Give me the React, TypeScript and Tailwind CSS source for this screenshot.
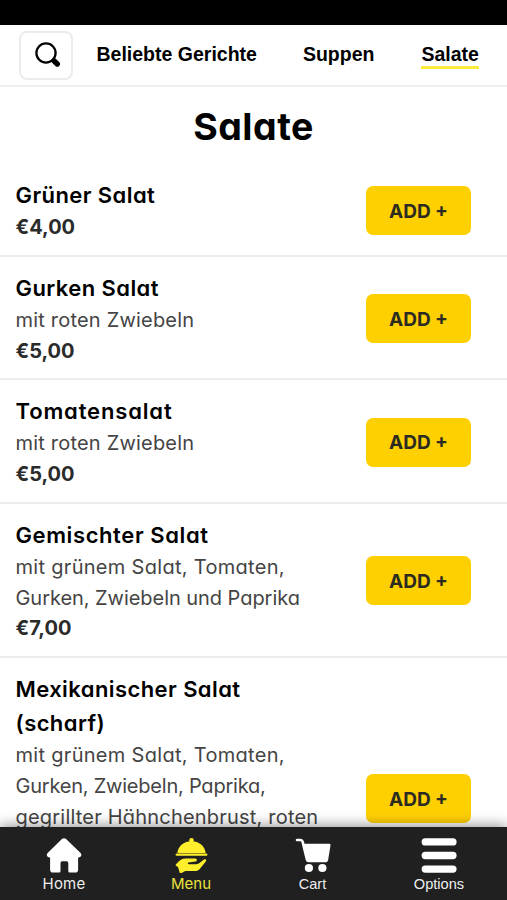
import { useState } from "react";
import type { ReactNode } from "react";

interface Line {
  text: string;
  className: string;
}

interface Dish {
  name: string;
  nameClass: string;
  lines: Line[];
  price?: string;
  rowClass?: string;
}

const categories = [
  { label: "Beliebte Gerichte", gap: "" },
  { label: "Suppen", gap: "ml-[46px]" },
  { label: "Salate", gap: "ml-[47px]" },
];

const dishes: Dish[] = [
  { name: "Grüner Salat", nameClass: "tracking-[0.42px]", lines: [], price: "€4,00" },
  {
    name: "Gurken Salat",
    nameClass: "tracking-[0.42px]",
    lines: [{ text: "mit roten Zwiebeln", className: "tracking-[0.2px]" }],
    price: "€5,00",
  },
  {
    name: "Tomatensalat",
    nameClass: "tracking-[0.85px]",
    lines: [{ text: "mit roten Zwiebeln", className: "tracking-[0.2px]" }],
    price: "€5,00",
  },
  {
    name: "Gemischter Salat",
    nameClass: "tracking-[0.6px]",
    lines: [
      { text: "mit grünem Salat, Tomaten,", className: "tracking-[0.3px]" },
      { text: "Gurken, Zwiebeln und Paprika", className: "tracking-[-0.05px]" },
    ],
    price: "€7,00",
  },
  {
    name: "Mexikanischer Salat (scharf)",
    nameClass: "tracking-[0.42px]",
    lines: [
      { text: "mit grünem Salat, Tomaten,", className: "tracking-[0.3px]" },
      { text: "Gurken, Zwiebeln, Paprika,", className: "tracking-[-0.22px]" },
      { text: "gegrillter Hähnchenbrust, roten", className: "tracking-[0.2px]" },
    ],
    rowClass: "h-[279px]",
  },
];

function SearchIcon() {
  return (
    <svg viewBox="0 0 28 28" className="ml-1 size-7" fill="none" stroke="#000" strokeLinecap="round">
      <circle cx="12" cy="12" r="9.6" strokeWidth="2.3" />
      <path d="M19 19l1.6 1.6" strokeWidth="2.6" />
      <path d="M20.4 20.2l2.9 2.8" strokeWidth="5.4" />
    </svg>
  );
}

function HomeIcon() {
  return (
    <svg viewBox="0 0 36 36" className="size-9" fill="#fff">
      <path d="M16.2 1.8c1-.9 2.6-.9 3.6 0L34.6 16c1.6 1.6.6 4.2-1.6 4.4h-.9v12.4a2.8 2.8 0 0 1-2.8 2.8h-5.5a1.5 1.5 0 0 1-1.5-1.5V26a1.7 1.7 0 0 0-1.7-1.7h-4.4a1.7 1.7 0 0 0-1.7 1.7v8.1a1.5 1.5 0 0 1-1.5 1.5H6.9a2.8 2.8 0 0 1-2.8-2.8V20.4h-.9c-2.2-.2-3.2-2.8-1.6-4.4z" />
    </svg>
  );
}

function MenuIcon() {
  return (
    <svg viewBox="0 0 34 36" className="h-9 w-[34px]" fill="#ffee2b">
      <circle cx="17.5" cy="3.4" r="2.3" />
      <path d="M3.4 15.9c.6-6.8 6.4-11.6 14.1-11.6s13.5 4.8 14.1 11.6z" />
      <rect x="1.6" y="16.6" width="31.8" height="2.2" rx="1" />
      <path d="M5.2 23.9c2-1.7 4-2.5 6.2-2.5h9.8c2.1 0 2.3 2.9.2 3.2l-7 .9c-.9.2-.8 1.6.2 1.7h7.6c1.5 0 2.6-.6 3.6-1.4l3.9-3.1c1.5-1.1 3.2.3 2.1 1.8l-6.1 7.5c-1.3 1.4-2.7 2-4.7 2h-8c-1.7 0-2.9.4-3.9 1.2l-2 .9c-.8.3-1.3 0-1.5-.8L4 30l-2-1.2c-.5-.5-.4-1.1 0-1.6z" />
    </svg>
  );
}

function CartIcon() {
  return (
    <svg viewBox="0 0 36 36" className="size-9" fill="#fff">
      <path d="M2 3h3.5c1.2 0 1.8.4 2.1 1.6l4.3 17.8c.2 1 .8 1.5 1.8 1.5H31" fill="none" stroke="#fff" strokeWidth="2.6" strokeLinecap="round" />
      <path d="M8.2 6.7h26c1 0 1.5.7 1.3 1.6l-2.4 15c-.2.9-.8 1.4-1.7 1.4H13.2z" />
      <circle cx="13.9" cy="31" r="4.1" />
      <circle cx="27.4" cy="31" r="4.1" />
    </svg>
  );
}

function OptionsIcon() {
  return (
    <svg viewBox="0 0 36 36" className="size-9" fill="#fff">
      <rect x="0.6" y="1.2" width="35" height="7.4" rx="3.7" />
      <rect x="0.6" y="14.8" width="35" height="7.4" rx="3.7" />
      <rect x="0.6" y="28.4" width="35" height="7.4" rx="3.7" />
    </svg>
  );
}

function TabItem({ icon, label, className }: { icon: ReactNode; label: string; className: string }) {
  return (
    <a href="#" className="flex flex-col items-center pt-2.5">
      {icon}
      <span className={`mt-px leading-5 ${className}`}>{label}</span>
    </a>
  );
}

function DishRow({ dish, onAdd }: { dish: Dish; onAdd: () => void }) {
  return (
    <li
      className={`flex shrink-0 items-center justify-between border-b-2 border-[#ededed] pt-3.5 pr-9 pb-3 pl-[15.5px] last:border-b-0 ${dish.rowClass ?? ""}`}
    >
      <div className="w-[320px] self-start">
        <h3 className={`w-[260px] text-[22px] leading-[34px] font-semibold text-black ${dish.nameClass}`}>{dish.name}</h3>
        {dish.lines.length > 0 && (
          <p className="text-[20px] leading-[30.75px] text-[#444]">
            {dish.lines.map((line) => (
              <span key={line.text} className={`block whitespace-nowrap ${line.className}`}>
                {line.text}
              </span>
            ))}
          </p>
        )}
        {dish.price && <p className="text-[20px] leading-[30.75px] font-bold text-[#2b2b2b]">{dish.price}</p>}
      </div>
      <button
        type="button"
        onClick={onAdd}
        className="h-[49px] w-[105px] shrink-0 rounded-[7px] bg-[#ffd000] pt-[3px] text-[19px] font-bold text-[#2b2b22]"
      >
        ADD +
      </button>
    </li>
  );
}

export default function App() {
  const [active, setActive] = useState("Salate");
  const [, setCount] = useState(0);

  return (
    <div className="flex h-[900px] w-[507px] flex-col overflow-hidden bg-white font-['Inter',sans-serif] [font-feature-settings:'cv11']">
      <div className="h-[25px] shrink-0 bg-black" />
      <header className="flex h-[62px] shrink-0 items-center border-b-2 border-[#efefef] pl-[19px]">
        <button
          type="button"
          aria-label="Suche"
          className="flex h-[49px] w-[54px] items-center justify-center rounded-lg border-2 border-[#ececec]"
        >
          <SearchIcon />
        </button>
        <nav className="ml-[23.5px] flex font-['Liberation_Sans',sans-serif] text-[19.5px] leading-[24px] font-bold text-black">
          {categories.map((c) => (
            <button
              key={c.label}
              type="button"
              onClick={() => setActive(c.label)}
              className={`border-b-[3px] pt-px whitespace-nowrap ${c.gap} ${active === c.label ? "border-[#fbec3a]" : "border-transparent"}`}
            >
              {c.label}
            </button>
          ))}
        </nav>
      </header>

      <main className="flex min-h-0 flex-1 flex-col overflow-hidden">
        <h2 className="h-[77px] shrink-0 text-center text-[37.5px] leading-[80px] font-bold tracking-[0.5px] text-black">
          Salate
        </h2>
        <ul className="flex flex-col">
          {dishes.map((dish) => (
            <DishRow key={dish.name} dish={dish} onAdd={() => setCount((n) => n + 1)} />
          ))}
        </ul>
      </main>

      <footer className="relative grid h-[73px] shrink-0 grid-cols-[128px_126px_117px_136px] bg-[#202020] shadow-[0_-2px_12px_rgba(0,0,0,0.4)]">
        <TabItem icon={<HomeIcon />} label="Home" className="text-[15px] tracking-[0.2px] text-[#eee]" />
        <TabItem icon={<MenuIcon />} label="Menu" className="text-[15px] text-[#ebe23c]" />
        <TabItem icon={<CartIcon />} label="Cart" className="font-['Liberation_Sans',sans-serif] text-[14.6px] text-[#eee]" />
        <TabItem icon={<OptionsIcon />} label="Options" className="font-['Liberation_Sans',sans-serif] text-[14.6px] text-[#eee]" />
      </footer>
    </div>
  );
}
